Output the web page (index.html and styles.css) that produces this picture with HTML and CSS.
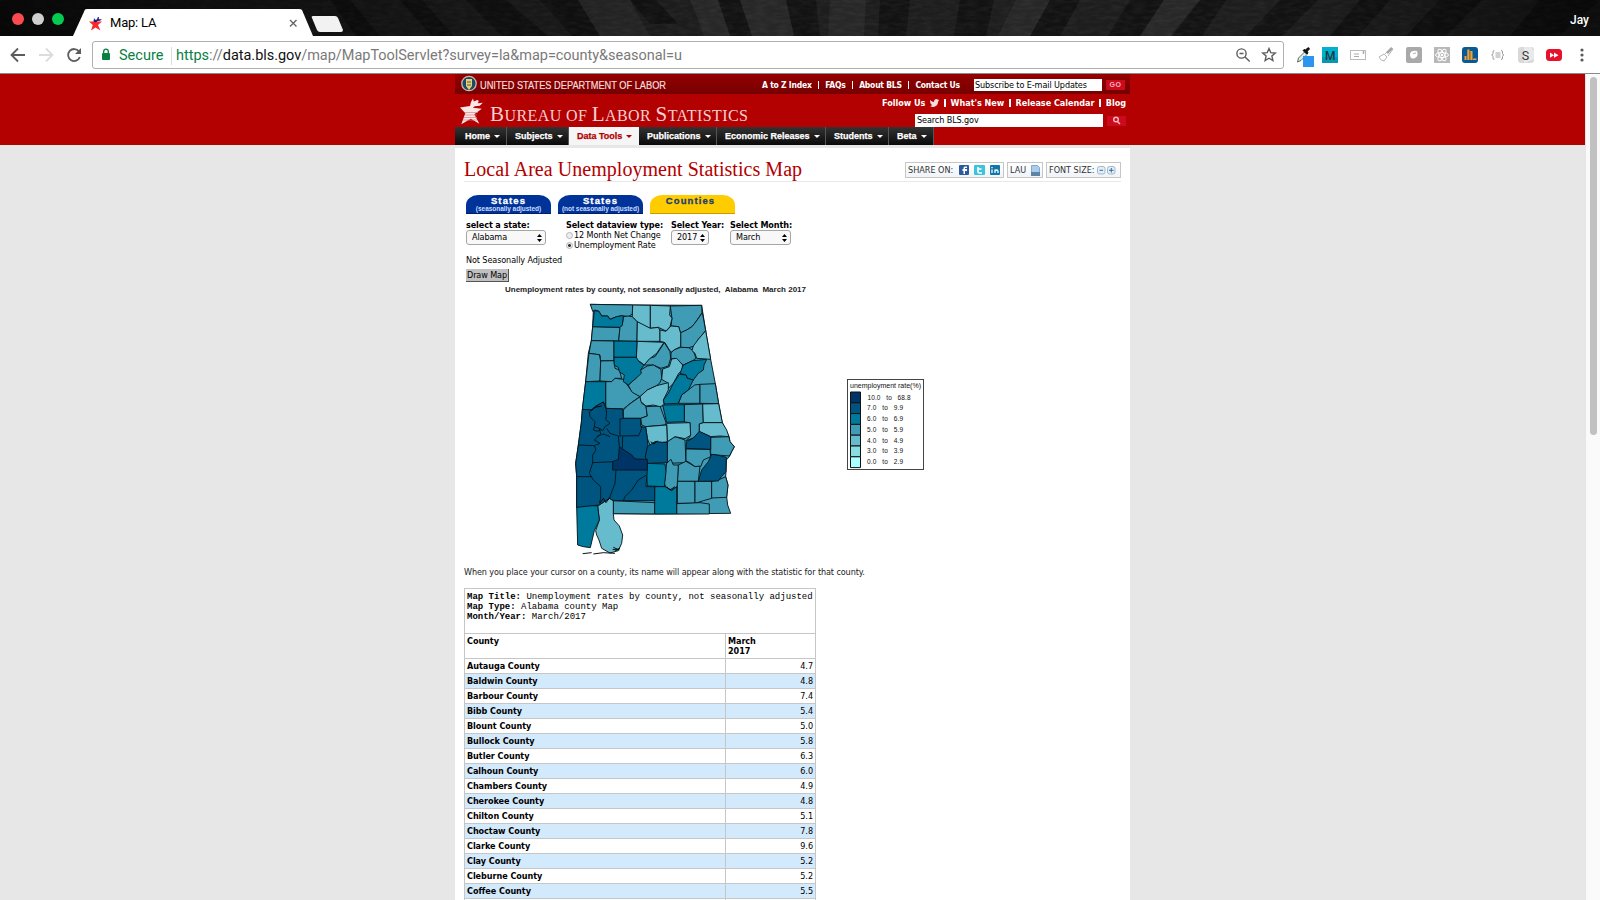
FILE: index.html
```html
<!DOCTYPE html>
<html lang="en">
<head>
<meta charset="utf-8">
<title>Map: LA</title>
<link rel="stylesheet" href="styles.css">
</head>
<body>
<div class="tabstrip">
  <svg class="wood" width="1600" height="36" viewBox="0 0 1600 36">
    <defs>
      <linearGradient id="shade" x1="0" x2="1"><stop offset="0" stop-color="#000" stop-opacity=".75"/><stop offset=".45" stop-color="#000" stop-opacity="0"/><stop offset=".8" stop-color="#000" stop-opacity="0"/><stop offset="1" stop-color="#000" stop-opacity=".55"/></linearGradient>
      <filter id="grain" x="0" y="0" width="100%" height="100%"><feTurbulence type="fractalNoise" baseFrequency=".09 .3" numOctaves="3" seed="4"/><feColorMatrix values="0 0 0 0 .5  0 0 0 0 .5  0 0 0 0 .5  .6 0 0 0 -.2"/></filter>
    </defs>
    <rect width="1600" height="36" fill="#1d1d1d"/>
    <g fill="#121212"><path d="M330 0h20l30 36h-24zM400 0h22l32 36h-22zM466 0h40l42 36h-46zM540 0h38l22 36h-28zM630 0h26l22 24h-28zM718 0h22l12 36h-22zM786 0h30l4 36h-26zM880 0h30l-4 36h-28zM960 0h34l-8 36h-32zM1050 0h30l-20 36h-30zM1130 0h34l-24 36h-32zM1200 0h26l-24 36h-30zM1280 0h38l-36 36h-36zM1360 0h30l-32 36h-28zM1440 0h42l-36 36h-40zM1540 0h60l-40 36h-50z"/></g>
    <g fill="#272727"><path d="M578 0h52l20 36h-50zM690 0h28l12 36h-26zM740 0h46l8 36h-42zM830 0h36l-2 36h-36zM1016 0h34l-20 36h-32zM1164 0h36l-30 36h-30z"/></g>
    <rect width="1600" height="36" filter="url(#grain)" opacity=".22"/>
    <rect width="1600" height="36" fill="url(#shade)"/>
    <path d="M73 36 85 9.500Q86 9 87 9H299Q301 9 302 10L313 36Z" fill="#fff"/>
    <path d="M313 16h22q2 0 3 2l5 12q0 2-2 2h-21q-2 0-3-2l-5-12q-1-2 1-2z" fill="#f2f2f2"/>
    <circle cx="18" cy="19" r="6" fill="#fc4b50"/><circle cx="38" cy="19" r="6" fill="#cfcfcf"/><circle cx="58" cy="19" r="6" fill="#05cb4f"/>
    <path d="M89 21.500h4.500l2.500-1.500 1.500 1.500h4.500l-4 3.500 2.500 5.500-5-3-4.500 3 1.800-5.500z" fill="#fb2a2a"/><path d="M94 18l1 1.800 2-.3.800-2.500 1.200.2-.2 2 3.200.1-2 1.500-2.500.3-2 1.400-2-1z" fill="#201d80"/>
    <path d="M290 20l6.500 6.500M296.500 20l-6.500 6.500" stroke="#666" stroke-width="1.400"/>
  </svg>
  <span class="tab-title">Map: LA</span>
  <span class="user">Jay</span>
</div>
<div class="toolbar">
  <svg width="92" height="38" viewBox="0 36 92 38" fill="none" stroke-width="1.800">
    <path d="M25 55H12M18 48.500 11.500 55l6.500 6.500" stroke="#5c5c5c"/>
    <path d="M39 55H52M46 48.500 52.500 55 46 61.500" stroke="#dcdcdc"/>
    <path d="M79 51.500A6 6 0 1 0 79.800 57" stroke="#5c5c5c"/><path d="M81 48v6h-6z" fill="#5c5c5c"/>
  </svg>
  <div class="omnibox">
    <svg width="10" height="14" viewBox="0 0 10 14"><rect x="1" y="5" width="8" height="7" rx="1" fill="#0b8043"/><path d="M2.700 5V3.500a2.300 2.300 0 0 1 4.600 0V5" fill="none" stroke="#0b8043" stroke-width="1.300"/></svg>
    <span class="secure">Secure</span>
    <span class="url"><span class="g">https</span>://<span class="k">data.bls.gov</span>/map/MapToolServlet?survey=la&amp;map=county&amp;seasonal=u</span>
    <svg class="omni-end" width="44" height="16" viewBox="1235 47 44 16" fill="none" stroke="#5c5c5c" stroke-width="1.400"><circle cx="1241.500" cy="53.500" r="4.600"/><path d="M1239.500 53.500h4M1245 57l4.700 4.500"/><path d="M1269 48.500l1.800 4.200 4.500.4-3.400 3 1 4.400-3.900-2.300-3.900 2.300 1-4.400-3.400-3 4.500-.4z"/></svg>
  </div>
  <svg class="exts" width="300" height="30" viewBox="1290 40 300 30">
    <path d="M1297.500 62l1-4 6-6 2.500 2.500-6 6z" fill="#d7efe0" stroke="#444" stroke-width=".8"/><path d="M1303 50.500l1-1 1.500.5 2-2q2-1 1.800 1.200l-2 2 .7 1.800-1 1z" fill="#111" stroke="#111"/><rect x="1303" y="56" width="11" height="11" fill="#2b95f0"/>
    <rect x="1322" y="47" width="16" height="16" fill="#00b1cf"/><rect x="1322" y="57" width="16" height="6" fill="#0798b3"/><text x="1325" y="59.500" font-family="Roboto" font-weight="500" font-size="12" fill="#1c3940">M</text>
    <rect x="1350.500" y="50.500" width="15" height="9" fill="#fff" stroke="#bbb"/><path d="M1354 54h5M1354 56.500h5" stroke="#aaa"/><path d="M1363.500 51v3" stroke="#aaa" stroke-width="1.500"/>
    <path d="M1379 57l5-3 3 3-3 4q-3 0-5-4zM1385 54l6-6 2 1-5 7" fill="#fff" stroke="#b5b5b5"/><path d="M1387 53l5-5" stroke="#a5a5a5" stroke-width="2.500"/>
    <rect x="1406" y="47" width="16" height="16" rx="2" fill="#a9a9a9"/><path d="M1410 54q1-4 7-3 2 5-2 7-5 2-5-4z" fill="#fff"/><path d="M1413 54q1-1 3-1" stroke="#aaa" fill="none"/>
    <rect x="1434" y="47" width="16" height="16" fill="#b8b8b8"/><g fill="none" stroke="#fff"><ellipse cx="1442" cy="55" rx="6.500" ry="2.500"/><ellipse cx="1442" cy="55" rx="6.500" ry="2.500" transform="rotate(60 1442 55)"/><ellipse cx="1442" cy="55" rx="6.500" ry="2.500" transform="rotate(120 1442 55)"/></g><circle cx="1442" cy="55" r="1.300" fill="#fff"/>
    <rect x="1462" y="47" width="16" height="16" rx="3" fill="#075a96"/><path d="M1464.500 60v-4h2v4zM1467.300 60V49.500h2.200V60zM1470.300 60v-9h2.200v9zM1473 60v-1.500h3.500V60z" fill="#f6a12b"/>
    <g fill="none" stroke="#999"><path d="M1494.500 50.500q-1.500 0-1.500 1.500v1.500q0 1-1.300 1.500 1.300.5 1.300 1.500v1.500q0 1.500 1.500 1.500M1501 50.500q1.500 0 1.500 1.500v1.500q0 1 1.300 1.500-1.300.5-1.300 1.500v1.500q0 1.500-1.500 1.500"/><path d="M1495.500 53h5M1495.500 55h5M1495.500 57h5" stroke-width=".9"/></g>
    <rect x="1518" y="47" width="16" height="16" rx="3" fill="#d9d9d9"/><path d="M1524 47h7l3 4v8l-10 4z" fill="#e9e9e9"/><text x="1521.800" y="59.500" font-family="Roboto" font-size="12.500" fill="#333">S</text>
    <rect x="1546" y="49" width="16" height="12" rx="3.500" fill="#e5102c"/><path d="M1550 52.500l4 2.700-4 2.600zM1554 52.500l4.500 2.700-4.500 2.600z" fill="#fff"/>
    <g fill="#5a5a5a"><circle cx="1582" cy="50" r="1.600"/><circle cx="1582" cy="55" r="1.600"/><circle cx="1582" cy="60" r="1.600"/></g>
  </svg>
</div>
<div class="viewport">
<div class="page">
  <header>
    <div class="banner">
      <div class="dol">
        <svg width="212" height="20" viewBox="455 74 212 20"><circle cx="469" cy="83.500" r="7.200" fill="#1b4967" stroke="#c9bfae" stroke-width="1.300"/><path d="M466 79h6v7l-3 4-3-4z" fill="#e9cf72"/><path d="M467 82h4M467 85h4" stroke="#4a5c5c"/><text x="480" y="88.500" font-family="Liberation Sans" font-size="11" fill="#f6dcdc" stroke="#f6dcdc" stroke-width=".2" textLength="186" lengthAdjust="spacingAndGlyphs">UNITED STATES DEPARTMENT OF LABOR</text></svg>
        <nav class="top-links"><span>A to Z Index</span><i></i><span>FAQs</span><i></i><span>About BLS</span><i></i><span>Contact Us</span></nav>
        <div class="field subscribe">Subscribe to E-mail Updates</div>
        <div class="go">GO</div>
      </div>
      <div class="brand">
        <svg width="300" height="33" viewBox="455 94 300 33"><path d="M460 107.500l10-1.500 1-4 2-3.500.8 3 3.500-1.500 1.500.8-1 2.500 5-.5-3 3-5 .5-2 1.500 9 1-7.500 5.500 5 9.500-8.500-5-9.500 5.500 4-11z" fill="#fbe6e6"/><path d="M465 112.500h13M465 115h12M464 117.500h13M463 120h14" stroke="#d98080" stroke-width=".7"/><text y="120.500" x="490" font-family="Liberation Serif" fill="#f9cfd0" font-size="16" textLength="258" lengthAdjust="spacing"><tspan font-size="21">B</tspan>UREAU OF <tspan font-size="21">L</tspan>ABOR <tspan font-size="21">S</tspan>TATISTICS</text></svg>
        <div class="brand-right">
          <div class="follow"><span>Follow Us</span><svg width="9" height="8" viewBox="0 0 9 8"><path d="M0 1q2 2 4 2 0-3 2.500-3L9 1 8 3q0 4-4.500 5Q1 8 0 7q2 0 2-1Q0 5 0 1z" fill="#f3dede"/></svg><i></i><span>What's New</span><i></i><span>Release Calendar</span><i></i><span>Blog</span></div>
          <div class="searchrow"><div class="field search">Search BLS.gov</div><div class="go mag"><svg width="9" height="9" viewBox="0 0 9 9"><circle cx="4" cy="3.500" r="2.300" fill="none" stroke="#f4b9bf" stroke-width="1.400"/><path d="M5.500 5.500 8 8" stroke="#f4b9bf" stroke-width="1.500"/></svg></div></div>
        </div>
      </div>
      <nav class="menu">
        <a class="m1">Home</a><a class="m2">Subjects</a><a class="m3 on">Data Tools</a><a class="m4">Publications</a><a class="m5">Economic Releases</a><a class="m6">Students</a><a class="m7">Beta</a>
      </nav>
    </div>
  </header>
  <main>
    <div class="heading">
      <h1>Local Area Unemployment Statistics Map</h1>
      <div class="tools">
        <div class="tool t1"><span>SHARE ON:</span><svg width="43" height="10" viewBox="0 0 43 10"><rect x="1" width="10" height="10" rx="1" fill="#2c5a9c"/><path d="M7 9V6h2V4H7V3h2V1.500H7Q5.500 1.500 5.500 3v1H4.500v2h1v3z" fill="#fff"/><rect x="16" width="11" height="10" rx="1" fill="#3cc3de"/><path d="M20 2v5q0 1 1.200 1H24M20 4h3.500" stroke="#fff" stroke-width="1.600" fill="none"/><rect x="32" width="10" height="10" rx="1" fill="#0e76a8"/><path d="M34 4.500V8M37 8V4.500M37 6q2-2 3 0v2M34 2v1.300" stroke="#fff" stroke-width="1.300" fill="none"/></svg></div>
        <div class="tool t2"><span>LAU</span><svg width="10" height="11" viewBox="0 0 10 11"><path d="M1.500.5h6l2 2v8h-8z" fill="#a9cdea" stroke="#7fabd0"/><path d="M1 7h9v4H1z" fill="#5d84a5"/></svg></div>
        <div class="tool t3"><span>FONT SIZE:</span><svg width="19" height="9" viewBox="0 0 19 9" fill="#e4edf4" stroke="#a3b9c9"><rect x=".5" y=".5" width="7.500" height="7.500" rx="2"/><rect x="10.500" y=".5" width="7.500" height="7.500" rx="2"/><path d="M2.500 4.300h3.500M12 4.300h4.500M14.300 2v4.500" stroke="#2f6ea3"/></svg></div>
      </div>
    </div>
    <div class="tabs">
      <div class="mtab"><b>States</b><small>(seasonally adjusted)</small></div>
      <div class="mtab"><b>States</b><small>(not seasonally adjusted)</small></div>
      <div class="mtab gold"><b>Counties</b></div>
    </div>
    <div class="form">
      <div class="f1"><b>select a state:</b><div class="sel s1"><span>Alabama</span><svg width="5" height="8" viewBox="0 0 5 8"><path d="M0 3 2.500 0 5 3zM0 5h5L2.500 8z"/></svg></div></div>
      <div class="f2"><b>Select dataview type:</b><div class="radio"><em></em>12 Month Net Change</div><div class="radio ck"><em></em>Unemployment Rate</div></div>
      <div class="f3"><b>Select Year:</b><div class="sel s2"><span>2017</span><svg width="5" height="8" viewBox="0 0 5 8"><path d="M0 3 2.500 0 5 3zM0 5h5L2.500 8z"/></svg></div></div>
      <div class="f4"><b>Select Month:</b><div class="sel s3"><span>March</span><svg width="5" height="8" viewBox="0 0 5 8"><path d="M0 3 2.500 0 5 3zM0 5h5L2.500 8z"/></svg></div></div>
    </div>
    <p class="nsa">Not Seasonally Adjusted</p>
    <div class="draw">Draw Map</div>
    <div class="maprow">
    <svg width="657" height="278" viewBox="464 282 657 278">
      <text x="505" y="292" font-family="Liberation Sans" font-weight="bold" font-size="8" fill="#222" textLength="301" lengthAdjust="spacingAndGlyphs">Unemployment rates by county, not seasonally adjusted,&#160; Alabama&#160; March 2017</text>
      <g transform="translate(560 290) scale(.33333)" stroke="#04161d" stroke-width="2.800" stroke-linejoin="round">
        <path fill="#409cb4" d="M91 43 218 45 425 46 437 122 452 208 466 281 476 341 487 398 497 420 507 440 510 455 523 470 515 485 508 500 499 510 498 545 497 560 504 585 500 620 503 645 512 670 284 672 160 671 160 632 118 645 50 652 50 560 47 520 55 465 64 398 67 360 77 275 85 190 94 152 98 110 100 62Z"/>
        <g fill="#409cb4">
          <path d="M91 43 218 45 217 72 205 80 187 77 170 80 150 88 143 78 125 78 117 64 105 60 98 64Z"/>
          <path d="M98 110 180 112 176 153 94 152Z"/><path d="M190 80 204 78 217 80 232 95 231 154 176 153 180 112 187 105Z"/>
          <path d="M331 48 425 46 426 68 408 95 396 110 380 120 362 130 356 110 333 108 336 85Z"/>
          <path d="M362 128 380 120 396 110 408 95 427 68 437 122 415 148 405 168 386 173 362 172Z"/>
          <path d="M94 152 162 153 162 212 122 213 120 195 87 190Z"/>
          <path d="M313 158 330 185 332 205 325 228 303 235 280 225 252 225 268 205 285 200 300 178Z"/>
          <path d="M333 187 345 178 362 172 386 173 400 182 408 205 398 212 370 225 358 215 345 205 333 207Z"/>
          <path d="M87 190 118 194 122 213 120 273 77 275Z"/><path d="M122 213 162 212 165 235 178 240 185 265 165 265 155 275 120 273Z"/>
          <path d="M262 228 280 225 303 238 305 265 300 278 290 287 262 300 240 320 217 310 205 285 228 265 242 240Z"/>
          <path d="M137 275 155 275 165 265 190 268 202 285 217 307 240 320 218 335 205 345 190 357 137 355Z"/>
          <path d="M404 285 420 283 420 340 355 340 365 315 385 300Z"/><path d="M420 283 466 281 476 341 420 340Z"/>
          <path d="M240 320 245 340 258 348 262 378 242 385 190 385 190 360 205 345Z"/>
          <path d="M258 350 300 348 308 370 318 398 316 405 257 410 245 405 242 385 262 378Z"/>
          <path d="M373 344 428 342 430 398 418 402 418 430 400 444 378 452 390 440 390 398 373 396Z"/>
          <path d="M322 455 345 440 375 450 378 518 320 520Z"/><path d="M378 477 450 478 452 500 430 510 422 530 405 530 392 520 378 512Z"/>
          <path d="M452 442 507 440 510 455 523 470 508 498 470 495 452 493Z"/>
          <path d="M378 514 405 530 420 528 415 574 352 574 355 525Z"/><path d="M320 520 333 508 340 525 355 525 352 590 335 600 318 592 313 580Z"/>
          <path d="M160 632 284 638 284 672 160 671Z"/><path d="M352 574 405 574 405 640 352 640Z"/><path d="M405 574 455 574 455 625 430 632 405 640Z"/><path d="M455 574 475 570 497 560 504 585 500 622 455 624Z"/><path d="M350 641 420 638 448 642 448 672 350 672Z"/>
        </g>
        <g fill="#66bccc">
          <path d="M218 45 271 46 271 115 245 105 232 95 217 80Z"/><path d="M271 46 331 48 329 75 336 85 330 110 318 123 295 112 271 115Z"/>
          <path d="M232 95 271 115 295 112 300 122 300 154 231 154Z"/><path d="M300 120 318 124 333 108 356 110 362 130 362 170 345 178 333 187 325 175 315 158 300 154Z"/>
          <path d="M437 122 452 208 410 205 405 190 396 182 400 168 415 148Z"/><path d="M231 154 312 157 290 190 268 207 252 225 240 215 229 210Z"/>
          <path d="M335 207 350 205 368 225 366 240 355 252 340 280 325 295 322 278 305 268 308 237 328 230Z"/>
          <path d="M325 278 325 300 310 330 313 345 300 350 280 345 258 348 243 335 240 320 262 300 290 287Z"/>
          <path d="M428 342 476 341 487 398 430 398Z"/><path d="M430 398 487 398 500 420 507 440 480 438 452 440 418 425 418 402Z"/>
          <path d="M320 400 390 398 392 436 375 446 345 440 322 455Z"/><path d="M257 410 320 405 322 455 305 458 288 455 270 465 262 445Z"/>
          <path d="M160 632 160 671 162 690 178 708 188 735 185 760 175 782 150 789 125 775 117 750 110 735 107 722 118 690 113 648 148 625Z"/>
        </g>
        <g fill="#007a9c">
          <path d="M103 62 117 64 125 78 143 78 150 88 170 80 187 77 190 80 187 105 180 112 98 110Z"/><path d="M162 153 231 154 229 202 162 202Z"/>
          <path d="M162 202 229 202 237 215 252 225 242 240 244 250 228 265 205 285 190 275 193 255 178 245 175 232 163 226Z"/>
          <path d="M370 225 398 212 440 208 432 225 430 240 415 250 400 270 382 265 378 255 360 250Z"/>
          <path d="M358 253 378 255 382 265 400 270 385 300 365 315 355 340 313 342 310 330 325 310 340 280Z"/>
          <path d="M77 275 137 275 137 345 130 336 105 350 95 360 67 358Z"/><path d="M308 345 373 344 373 395 320 397Z"/>
          <path d="M258 520 315 522 318 545 313 590 262 588Z"/><path d="M284 590 315 590 335 602 350 590 350 672 284 672Z"/>
          <path d="M50 652 80 645 113 648 118 690 103 722 91 773 70 770 53 765Z"/>
        </g>
        <g fill="#005580">
          <path d="M67 358 95 360 105 350 130 336 137 355 188 357 190 385 242 385 242 410 257 412 262 445 264 470 256 500 262 508 262 540 258 590 284 590 284 632 160 632 148 625 118 645 50 652 50 560 47 520 55 465 64 398Z"/>
          <path d="M262 470 285 455 322 458 322 518 262 520 256 500Z"/><path d="M418 424 452 440 452 478 378 475 380 455 400 444Z"/>
          <path d="M455 493 470 495 499 502 498 545 484 560 475 573 415 574 425 540 445 515Z"/>
        </g>
        <path fill="#003366" d="M178 470 215 495 225 507 262 508 262 540 158 540 158 515 175 508Z"/>
        <path fill="none" d="M95 360 88 366 90 380 105 395 103 410 118 415 128 422 135 410 150 400 137 388 140 370 137 345M103 410 100 420 112 424 122 418M140 415 150 430 175 438M180 388 180 438M178 388 190 385M175 438 178 470M178 438 236 437 245 415 245 408M188 440 187 475M110 440 130 432 150 440M118 415 122 432 103 450 120 460 103 467 108 480 98 495M55 465 103 467M50 560 95 560M98 495 98 518 160 515M98 518 88 550 100 570 122 590 122 625 118 640M168 540 165 580 148 625M258 556 235 570 215 600 195 620 190 632"/>
        <path fill="none" stroke="#000" d="M93 363 105 352 125 348M120 640 130 625 138 638 150 622M272 455 282 462 292 452M320 590 330 600 345 590M68 791 95 788M100 792 130 788 165 790M160 772l18 8M166 782l14-8M158 778l14 2"/>
      </g>
      <rect x="847.500" y="379.500" width="76" height="90" fill="#fff" stroke="#444"/>
      <g font-family="Liberation Sans" font-size="6.500" fill="#111"><text x="850" y="387.500" textLength="71" lengthAdjust="spacingAndGlyphs">unemployment rate(%)</text>
      <text x="867.500" y="399.500" textLength="43">10.0&#160;&#160; to&#160;&#160; 68.8</text><text x="867" y="410" textLength="36">7.0&#160;&#160; to&#160;&#160; 9.9</text><text x="867" y="421" textLength="36">6.0&#160;&#160; to&#160;&#160; 6.9</text><text x="867" y="431.500" textLength="36">5.0&#160;&#160; to&#160;&#160; 5.9</text><text x="867" y="442.500" textLength="36">4.0&#160;&#160; to&#160;&#160; 4.9</text><text x="867" y="453" textLength="36">3.0&#160;&#160; to&#160;&#160; 3.9</text><text x="867" y="464" textLength="36">0.0&#160;&#160; to&#160;&#160; 2.9</text></g>
      <g stroke="#111"><path fill="#003366" d="M850.500 392h10v10.800h-10z"/><path fill="#005580" d="M850.500 402.800h10v10.800h-10z"/><path fill="#007a9c" d="M850.500 413.600h10v10.800h-10z"/><path fill="#409cb4" d="M850.500 424.400h10v10.800h-10z"/><path fill="#66bccc" d="M850.500 435.200h10V446h-10z"/><path fill="#88dde0" d="M850.500 446h10v10.800h-10z"/><path fill="#aaffff" d="M850.500 456.800h10v10.800h-10z"/></g>
    </svg>
    </div>
    <p class="hint">When you place your cursor on a county, its name will appear along with the statistic for that county.</p>
    <table>
      <colgroup><col class="c1"><col class="c2"></colgroup>
      <tr class="cap"><td colspan="2"><b>Map Title:</b> Unemployment rates by county, not seasonally adjusted<br><b>Map Type:</b> Alabama county Map<br><b>Month/Year:</b> March/2017</td></tr>
      <tr class="hd"><th>County</th><th>March<br>2017</th></tr>
      <tr><th>Autauga County</th><td>4.7</td></tr>
      <tr><th>Baldwin County</th><td>4.8</td></tr>
      <tr><th>Barbour County</th><td>7.4</td></tr>
      <tr><th>Bibb County</th><td>5.4</td></tr>
      <tr><th>Blount County</th><td>5.0</td></tr>
      <tr><th>Bullock County</th><td>5.8</td></tr>
      <tr><th>Butler County</th><td>6.3</td></tr>
      <tr><th>Calhoun County</th><td>6.0</td></tr>
      <tr><th>Chambers County</th><td>4.9</td></tr>
      <tr><th>Cherokee County</th><td>4.8</td></tr>
      <tr><th>Chilton County</th><td>5.1</td></tr>
      <tr><th>Choctaw County</th><td>7.8</td></tr>
      <tr><th>Clarke County</th><td>9.6</td></tr>
      <tr><th>Clay County</th><td>5.2</td></tr>
      <tr><th>Cleburne County</th><td>5.2</td></tr>
      <tr><th>Coffee County</th><td>5.5</td></tr>
      <tr><th></th><td></td></tr>
    </table>
  </main>
</div>
<div class="scroll"><div class="thumb"></div></div>
</div>
</body>
</html>
```

FILE: styles.css
```css
* { box-sizing: border-box; }
body { margin: 0; width: 1600px; height: 900px; overflow: hidden; background: #e7e7e7; font-family: "DejaVu Sans Condensed", "DejaVu Sans", sans-serif; font-stretch: condensed; font-size: 9px; line-height: 10px; letter-spacing: -.1px; color: #000; }
svg { display: block; flex: none; overflow: visible; letter-spacing: 0; }
span { white-space: nowrap; }
b { font-weight: bold; }
p, h1 { margin: 0; font-weight: normal; }

.tabstrip { position: relative; height: 36px; font-family: Roboto, sans-serif; font-stretch: normal; letter-spacing: 0; }
.wood { position: absolute; left: 0; top: 0; }
.tab-title { position: absolute; left: 110px; top: 15px; font-size: 13px; line-height: 16px; letter-spacing: -.2px; }
.user { position: absolute; right: 11px; top: 12px; font-size: 12px; line-height: 16px; font-weight: 500; color: #fff; }
.toolbar { display: flex; align-items: center; height: 38px; background: #fff; border-bottom: 1px solid #8a8a8a; font-family: Roboto, sans-serif; font-stretch: normal; letter-spacing: 0; }
.omnibox { display: flex; align-items: center; width: 1192px; height: 28px; padding-left: 8px; border: 1px solid #b0b0b0; border-radius: 3px; font-size: 14.5px; line-height: 18px; color: #7a7a7a; }
.secure { width: 53px; margin: 2px 0 0 8px; color: #0b8043; border-right: 1px solid #ddd; }
.url { margin: 2px 0 0 4px; letter-spacing: -.03px; }
.g { color: #0b8043; }
.k { color: #111; }
.omni-end { margin-left: auto; margin-right: 4px; }
.exts { margin-left: 6px; }

.viewport { display: flex; height: 826px; }
.page { width: 1585px; }
header { height: 71px; background: #b30000; }
.banner { width: 675px; margin-left: 455px; }
.dol { display: flex; align-items: center; height: 20px; background: linear-gradient(#960000, #750000); }
.top-links { display: flex; justify-content: space-between; align-items: center; width: 198px; margin: 1px 0 0 95px; color: #fff; font-weight: bold; font-size: 8.5px; letter-spacing: -.22px; }
.top-links i, .follow i { width: 1.5px; height: 8px; background: #fff; }
.field { background: #fff; padding-left: 1px; height: 12px; line-height: 12px; white-space: nowrap; }
.subscribe { width: 128px; margin: 1px 0 0 14px; }
.go { width: 19px; height: 10px; margin: 2px 0 0 4px; background: #cc0a1e; color: #f6b6bb; font: bold 7px/10px "Liberation Sans", sans-serif; text-align: center; letter-spacing: .5px; }
.brand { display: flex; height: 33px; }
.brand-right { flex: 1; padding: 4px 7px 0 127px; }
.follow { display: flex; justify-content: space-between; align-items: center; height: 10px; color: #fff; font-weight: bold; letter-spacing: -.03px; }
.searchrow { display: flex; align-items: center; margin: 6px 0 0 33px; }
.search { width: 188px; height: 13px; padding-left: 2px; }
.mag { display: flex; justify-content: center; margin-top: 0; }
.menu { display: flex; height: 18px; font: bold 9px/18px "Liberation Sans", Arial, sans-serif; letter-spacing: 0; color: #fff; -webkit-text-stroke: .25px; }
.menu a { display: flex; align-items: center; padding-left: 8px; background: linear-gradient(#333, #0a0a0a); border-right: 1px solid #555; white-space: nowrap; }
.menu .m1 { padding-left: 10px; }
.menu a::after { content: ""; margin-left: 4px; border: 3px solid transparent; border-top-color: currentColor; border-bottom: 0; }
.menu a.on { background: #f5f5f5; color: #b30000; border-color: #f5f5f5; }
.m1 { width: 52px; } .m2 { width: 62px; } .m3 { width: 70px; } .m4 { width: 78px; } .m5 { width: 109px; } .m6 { width: 63px; } .m7 { width: 45px; }

main { width: 675px; height: 752px; margin: 3px 0 0 455px; padding: 0 9px; background: #fff; overflow: hidden; }
.heading { display: flex; justify-content: space-between; height: 34px; border-bottom: 1px solid #e8e8e8; }
h1 { padding-top: 9px; font: 20px/24px "Liberation Serif", "Times New Roman", serif; letter-spacing: .04px; color: #b30000; white-space: nowrap; }
.tools { display: flex; gap: 3px; padding-top: 14px; }
.tool { display: flex; align-items: center; justify-content: space-between; height: 16px; padding: 0 2px; border: 1px solid #c6c6c6; color: #333; background: linear-gradient(#fff, #eff4f9); letter-spacing: 0; }
.t1 { width: 99px; } .t2 { width: 36px; } .t3 { width: 75px; }
.t3 { padding-right: 4px; }
.tabs { display: flex; gap: 7px; padding: 13px 0 0 2px; }
.mtab { width: 85px; height: 19px; border-radius: 12px 12px 0 0 / 10px 10px 0 0; border-bottom: 1px solid #001f66; background: #003399; color: #fff; text-align: center; font-family: "Liberation Sans", sans-serif; white-space: nowrap; }
.mtab b { display: block; font-size: 9.5px; line-height: 11px; letter-spacing: 1.1px; -webkit-text-stroke: .3px; }
.mtab small { display: block; font-size: 6.5px; font-weight: bold; line-height: 6px; letter-spacing: -.04px; color: #cddcff; }
.gold { background: #ffcc00; color: #1c3d70; border-color: #c99d00; padding-right: 4px; }
.form { display: flex; padding: 6px 0 0 2px; height: 38px; }
.form b { display: block; height: 10px; }
.f1 { width: 100px; } .f2 { width: 105px; } .f3 { width: 59px; }
.sel { display: flex; align-items: center; justify-content: space-between; height: 15px; padding: 0 3px 2px 5px; border: 1px solid #a5a5a5; border-radius: 3px; background: #f8f8f8; }
.sel svg { margin-top: 2px; }
.s1 { width: 80px; } .s2 { width: 38px; } .s3 { width: 61px; }
.radio { display: flex; align-items: center; height: 10px; white-space: nowrap; }
.radio em { width: 7px; height: 7px; margin: 1px 1px 0 0; border: 1px solid #b5b5b5; border-radius: 50%; background: #eee; }
.ck em { background: radial-gradient(#333 35%, #eee 45%); }
.nsa { padding: 3px 0 0 2px; height: 17px; }
.draw { width: 43px; height: 13px; margin: 0 0 0 2px; padding-left: 1px; line-height: 12px; background: #c0c0c0; border-right: 1px solid #555; border-bottom: 1px solid #555; }
.maprow { height: 278px; }
.hint { height: 28px; padding-top: 7px; color: #222; }
table { width: 352px; border-collapse: collapse; table-layout: fixed; letter-spacing: -.05px; }
.c1 { width: 261px; }
td, th { height: 15px; padding: 0 2px; border: 1px solid #c6c6c6; line-height: 10px; text-align: left; vertical-align: middle; }
td { text-align: right; }
tr:nth-child(even) td, tr:nth-child(even) th { background: #d3e9fc; }
.hd th { height: 25px; vertical-align: top; padding-top: 2px; background: #fff !important; }
.cap td { height: 45px; vertical-align: top; text-align: left; padding-top: 3px; font: 9px/10px "Liberation Mono", monospace; letter-spacing: 0; white-space: nowrap; }

.scroll { width: 15px; padding: 3px 3px 0 4px; background: #fafafa; border-left: 1px solid #e5e5e5; }
.thumb { height: 358px; border-radius: 4px; background: #c1c1c1; }
```
